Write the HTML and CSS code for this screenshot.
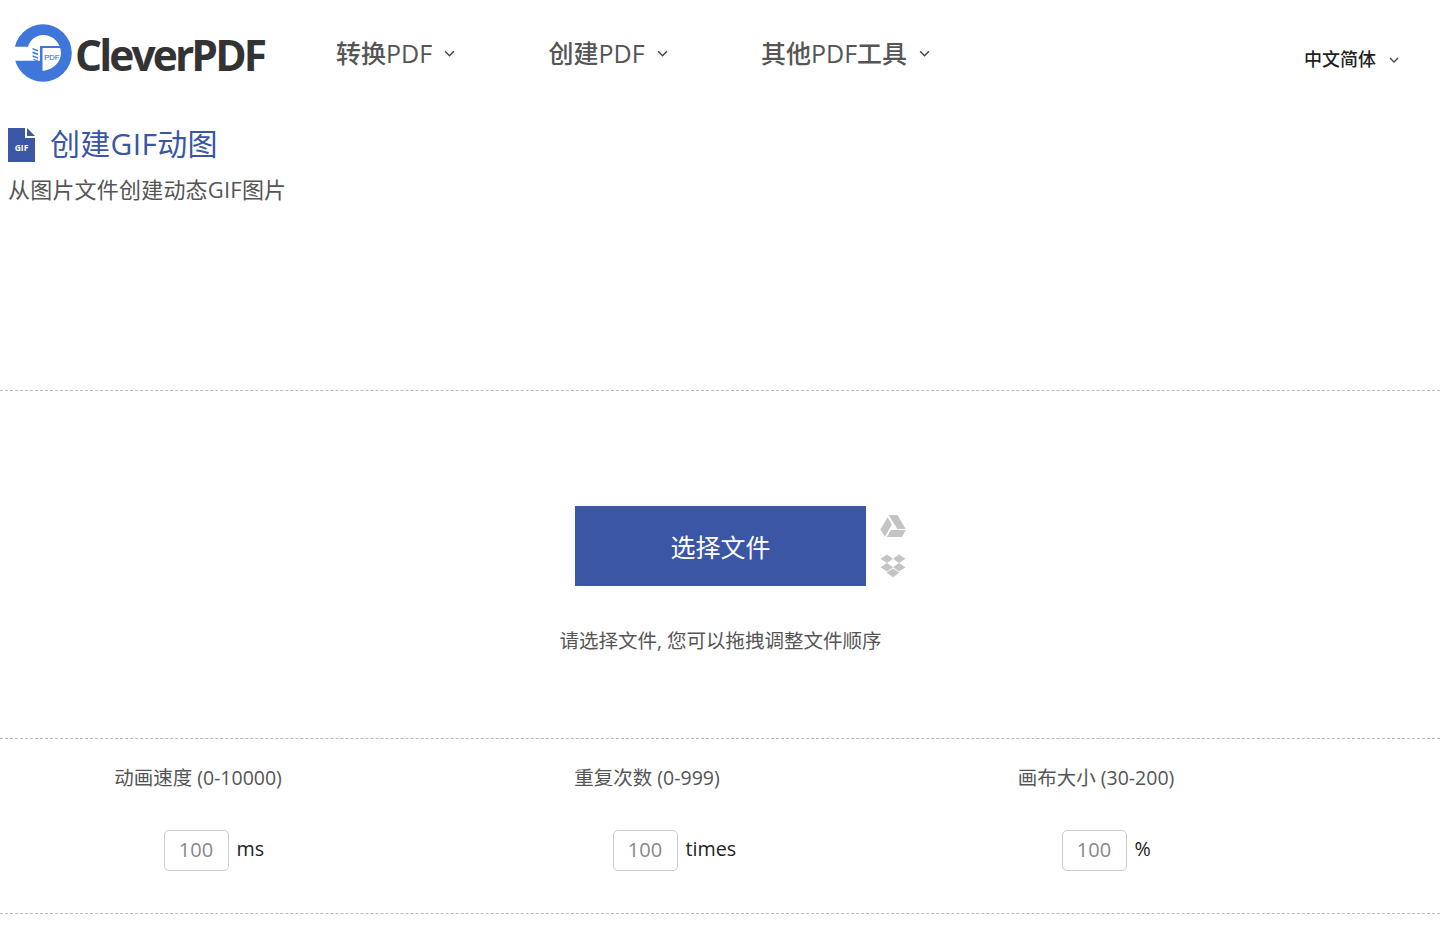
FILE: index.html
```html
<!DOCTYPE html>
<html lang="zh">
<head>
<meta charset="utf-8">
<title>创建GIF动图 - CleverPDF</title>
<link rel="stylesheet" href="styles.css">
</head>
<body>
<header class="header">
  <a class="logo" href="#">
    <svg class="logo-mark" viewBox="0 0 58 58" width="58" height="58" aria-hidden="true">
      <circle cx="29" cy="29" r="28.8" fill="#3f76d9"/>
      <path d="M0 22.7 H14 C16 16 22 11 29 11 C39 11 47 19 47 29 C47 38 40 45 30 46.7 H28 V36.7 H0 Z" fill="#fff"/>
      <path d="M26 22 H46 V24 H28.5 V47 H26 Z" fill="#3f76d9"/>
      <path d="M18.5 24 L24 26 V27.6 L18.5 25.6 Z M18.5 27.6 L24 29.6 V31.2 L18.5 29.2 Z M18.5 31.2 L24 33.2 V34.8 L18.5 32.8 Z M19.5 34.8 L24 36.4 V37.4 L19.5 36 Z" fill="#3f76d9"/>
      <text x="30.3" y="35.5" class="logo-pdf">PDF</text>
    </svg>
    <span class="logo-text">CleverPDF</span>
  </a>
  <nav class="nav">
    <a class="nav-item nav-first" href="#">转换PDF<svg class="chev" viewBox="0 0 10 6" width="11" height="7"><path d="M1 1l4 4 4-4" fill="none" stroke="currentColor" stroke-width="1.3"/></svg></a>
    <a class="nav-item nav-second" href="#">创建PDF<svg class="chev" viewBox="0 0 10 6" width="11" height="7"><path d="M1 1l4 4 4-4" fill="none" stroke="currentColor" stroke-width="1.3"/></svg></a>
    <a class="nav-item" href="#">其他PDF工具<svg class="chev" viewBox="0 0 10 6" width="11" height="7"><path d="M1 1l4 4 4-4" fill="none" stroke="currentColor" stroke-width="1.3"/></svg></a>
  </nav>
  <a class="lang" href="#">中文简体<svg class="chev lang-chev" viewBox="0 0 10 6" width="10" height="6"><path d="M1 1l4 4 4-4" fill="none" stroke="currentColor" stroke-width="1.3"/></svg></a>
</header>

<section class="intro">
  <div class="title-row">
    <svg class="file-icon" viewBox="0 0 27 34" width="27" height="34" aria-hidden="true">
      <path d="M0 0 H17 V10 H27 V34 H0 Z" fill="#3a56a5"/>
      <path d="M19 0 L27 8 H19 Z" fill="#3a56a5"/>
      <text x="13.5" y="23" class="file-icon-text">GIF</text>
    </svg>
    <h1 class="title">创建GIF动图</h1>
  </div>
  <p class="subtitle">从图片文件创建动态GIF图片</p>
</section>

<section class="upload">
  <div class="upload-row">
    <button class="pick" type="button">选择文件</button>
    <div class="clouds">
      <svg viewBox="0 0 26 24" width="26" height="24" aria-hidden="true">
        <path d="M8.6 1 H17.4 L25.8 15 H17.4 Z M7.6 3.2 L11.8 10.4 L5 22.8 L0.4 15.6 Z M6.8 23 L10.8 16 H25.8 L21.8 23 Z" fill="#c4c4c4"/>
      </svg>
      <svg viewBox="0 0 26 24" width="26" height="24" aria-hidden="true">
        <path d="M7 0.5 L13 4.8 L7 9 L0.5 4.8 Z M19 0.5 L25.5 4.8 L19 9 L13 4.8 Z M7 9 L13 13.2 L7 17.4 L0.5 13.2 Z M19 9 L25.5 13.2 L19 17.4 L13 13.2 Z M6.5 18.6 L13 14.6 L19.5 18.6 L13 23.2 Z" fill="#c4c4c4"/>
      </svg>
    </div>
  </div>
  <p class="hint">请选择文件, 您可以拖拽调整文件顺序</p>
</section>

<section class="settings">
  <div class="setting">
    <label class="setting-label">动画速度 (0-10000)</label>
    <div class="setting-field"><input class="num" value="100"><span class="unit">ms</span></div>
  </div>
  <div class="setting">
    <label class="setting-label">重复次数 (0-999)</label>
    <div class="setting-field"><input class="num" value="100"><span class="unit">times</span></div>
  </div>
  <div class="setting">
    <label class="setting-label">画布大小 (30-200)</label>
    <div class="setting-field"><input class="num" value="100"><span class="unit">%</span></div>
  </div>
</section>
</body>
</html>
```
FILE: styles.css
```css
* { box-sizing: border-box; }
html, body { margin: 0; padding: 0; }
body {
  height: 932px;
  overflow: hidden;
  background: #fff;
  color: #555;
  font-family: "Open Sans", "Noto Sans CJK SC", sans-serif;
}
a { color: inherit; text-decoration: none; }

.header {
  display: flex;
  align-items: flex-start;
  height: 110px;
  padding: 24px 41px 0 14px;
}
.logo { display: flex; align-items: center; width: 322px; height: 58px; }
.logo-mark { flex: none; }
.logo-pdf { font: 400 7.6px "Liberation Sans", sans-serif; fill: #3f76d9; stroke: #3f76d9; stroke-width: 0.15px; }
.logo-text {
  margin-left: 3px;
  padding-top: 4px;
  font: 700 42.5px/58px "Open Sans", sans-serif;
  letter-spacing: -2.9px;
  color: #333;
}
.nav { display: flex; flex: 1; padding-top: 10px; }
.nav-item {
  display: flex;
  align-items: center;
  height: 36px;
  font-size: 25px;
  font-weight: 500;
  color: #555;
}
.nav-first { width: 212.5px; }
.nav-second { width: 212.5px; }
.chev { margin-left: 12px; margin-top: 3px; color: #444; }
.lang {
  display: flex;
  align-items: center;
  height: 24px;
  margin-top: 22px;
  font-size: 18px;
  font-weight: 500;
  color: #222;
}
.lang-chev { margin-left: 13px; margin-top: 3px; }

.intro { height: 281px; padding: 16px 8px 0; border-bottom: 1px dashed #bbb; }
.title-row { display: flex; align-items: center; height: 36px; }
.file-icon { flex: none; margin-top: 2px; }
.file-icon-text { font: 700 8.5px "Open Sans", sans-serif; fill: #fff; text-anchor: middle; }
.title {
  margin: 0 0 0 15px;
  font-size: 30px;
  line-height: 36px;
  font-weight: 400;
  letter-spacing: 0.3px;
  color: #3a56a5;
}
.subtitle { margin: 11px 0 0; font-size: 22px; line-height: 32px; letter-spacing: 0.2px; color: #555; }

.upload {
  height: 348px;
  padding-top: 115px;
  border-bottom: 1px dashed #bbb;
}
.upload-row { display: flex; justify-content: center; position: relative; padding-left: 1px; }
.pick {
  width: 291px;
  height: 80px;
  padding: 0 0 1px;
  border: 0;
  background: #3a56a5;
  color: #fff;
  font: 400 25px "Open Sans", "Noto Sans CJK SC", sans-serif;
}
.clouds {
  position: absolute;
  left: 880px;
  top: 8px;
  display: flex;
  flex-direction: column;
  gap: 16px;
  filter: blur(0.5px);
}
.hint { margin: 41px 0 0; padding-left: 1px; text-align: center; font-size: 19.5px; line-height: 28px; color: #555; }

.settings {
  display: grid;
  grid-template-columns: repeat(3, 396px);
  column-gap: 53px;
  height: 175px;
  padding-top: 25px;
  border-bottom: 1px dashed #bbb;
}
.setting { display: flex; flex-direction: column; align-items: center; }
.setting-label { font-size: 19.5px; line-height: 28px; color: #555; }
.setting-field {
  display: grid;
  grid-template-columns: 1fr 65px 1fr;
  align-items: center;
  width: 100%;
  margin-top: 38px;
  padding-right: 4px;
}
.num {
  grid-column: 2;
  width: 65px;
  height: 41px;
  padding: 0 0 2px;
  border: 1px solid #ccc;
  border-radius: 5px;
  text-align: center;
  font: 400 20px "Open Sans", sans-serif;
  color: #888;
  background: #fff;
}
.unit { margin-left: 8px; margin-top: -5px; font-size: 19.7px; color: #222; }
```
